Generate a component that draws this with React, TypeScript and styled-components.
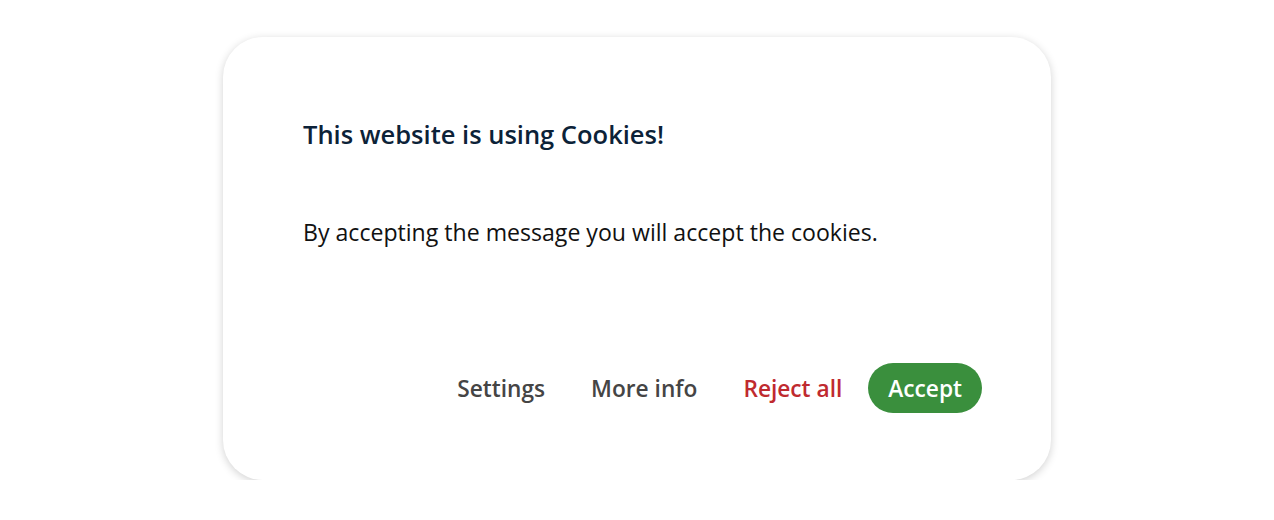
import styled, { createGlobalStyle } from "styled-components";

const GlobalStyle = createGlobalStyle`
  html, body {
    margin: 0;
    padding: 0;
    background: #ffffff;
    font-family: "Open Sans", "Noto Sans", sans-serif;
  }
`;

const Page = styled.div`
  display: flex;
  justify-content: center;
  padding-top: 37px;
`;

const Card = styled.div`
  width: 828px;
  height: 443px;
  box-sizing: border-box;
  padding: 81px 69px 67px 80px;
  background: #ffffff;
  border-radius: 40px;
  box-shadow: 0 2px 8px rgba(0, 0, 0, 0.18);
  display: flex;
  flex-direction: column;
`;

const Title = styled.h2`
  margin: 0;
  font-size: 25.5px;
  line-height: 32px;
  font-weight: 600;
  color: #0c2238;
`;

const Message = styled.p`
  margin: 67px 0 0;
  font-size: 23.1px;
  line-height: 30px;
  font-weight: 400;
  color: #111111;
`;

const Actions = styled.div`
  margin-top: auto;
  display: flex;
  justify-content: flex-end;
  gap: 6px;
`;

const Btn = styled.button<{ $variant?: "plain" | "danger" | "primary" }>`
  height: 50px;
  padding: 0 20px;
  border: none;
  border-radius: 25px;
  font-family: inherit;
  font-size: 22.7px;
  font-weight: 600;
  cursor: pointer;
  background: ${(p) => (p.$variant === "primary" ? "#3a8f3d" : "transparent")};
  color: ${(p) =>
    p.$variant === "primary" ? "#ffffff" : p.$variant === "danger" ? "#bf2a2f" : "#454545"};
`;

function App() {
  return (
    <>
      <GlobalStyle />
      <Page>
        <Card>
          <Title>This website is using Cookies!</Title>
          <Message>By accepting the message you will accept the cookies.</Message>
          <Actions>
            <Btn>Settings</Btn>
            <Btn>More info</Btn>
            <Btn $variant="danger">Reject all</Btn>
            <Btn $variant="primary">Accept</Btn>
          </Actions>
        </Card>
      </Page>
    </>
  );
}

export default App;
